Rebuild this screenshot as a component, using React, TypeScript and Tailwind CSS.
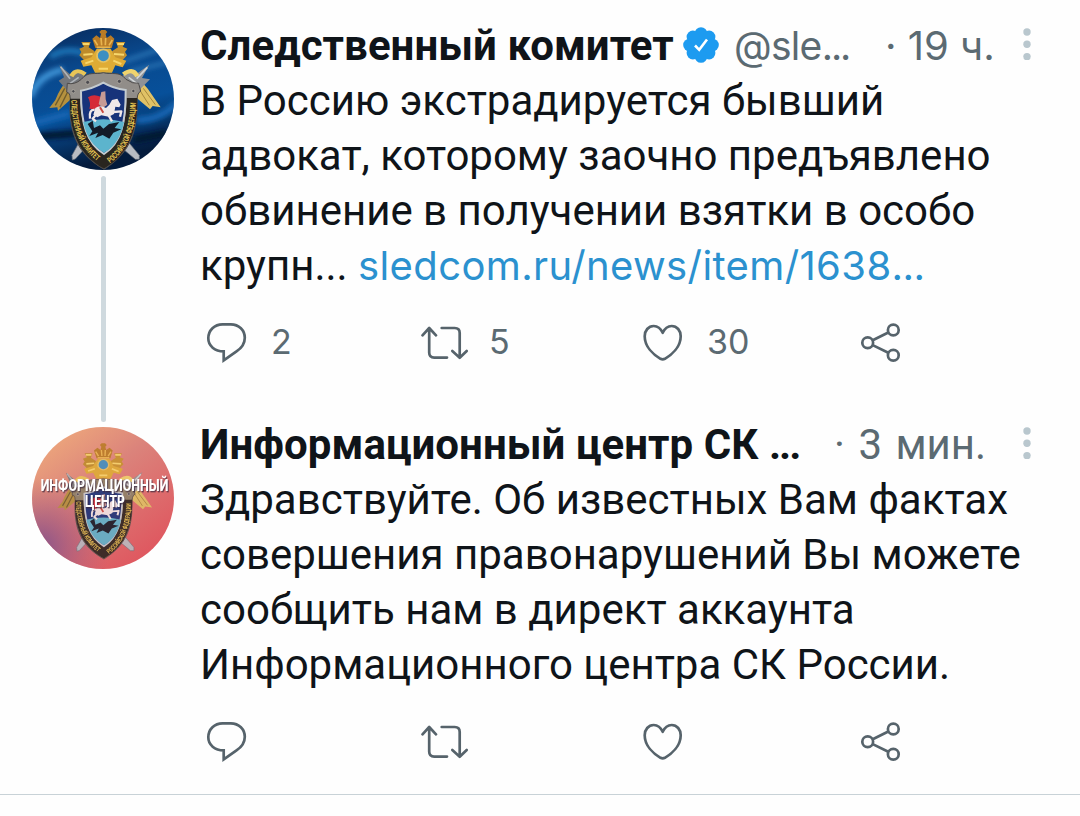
import type { ReactNode } from 'react';

// ─────────────────────────────────────────────
// Thread — two connected tweets with action rows
// ─────────────────────────────────────────────

interface TweetProps {
  avatar: ReactNode;
  header: ReactNode;
  children: ReactNode;
  counts?: { replies?: number; retweets?: number; likes?: number };
  hasNext?: boolean;
}

/* ── Emblem: crowned double eagle behind a shield ── */
const Emblem = ({ id, plate = '#918d89' }: { id: string; plate?: string }) => (
  <g>
    {/* swords */}
    <path d="M180 362 L196 384 L166 417 L157 420 L156 406 Z" fill="#b9bcc2" stroke="#666b76" strokeWidth="2" />
    <path d="M322 362 L308 386 L346 418 L358 418 L358 406 Z" fill="#b9bcc2" stroke="#666b76" strokeWidth="2" />
    {/* wings */}
    <path d="M142 180 Q120 204 106 240 L88 264 L112 262 L114 272 L150 240 L160 205 Z" fill="#b5913e" />
    <path d="M360 180 Q384 204 404 236 L422 262 L398 258 L390 268 L350 234 L342 205 Z" fill="#e0c266" />
    <path d="M134 205 L106 256 M146 210 L120 262" stroke="#6f5c2c" strokeWidth="4" />
    <path d="M370 205 L406 254 M360 212 L388 256" stroke="#a5873c" strokeWidth="3" />
    {/* metal hilts over the wings */}
    <path d="M118 136 L152 164 L182 158 L198 172 L170 192 L142 212 L116 182 L132 172 Z" fill="#74777c" />
    <path d="M122 140 L150 176 M142 196 L176 172" stroke="#aeb3b8" strokeWidth="5" />
    <path d="M388 134 L352 160 L318 158 L304 172 L332 190 L356 212 L390 178 L366 174 Z" fill="#8f9296" />
    <path d="M382 142 L350 176 M358 196 L326 172" stroke="#d2d5d6" strokeWidth="5" />
    <path d="M148 166 Q164 134 200 158 L192 168 Q172 150 160 172 Z" fill="#e9c557" />
    <path d="M306 158 Q342 132 358 166 L346 172 Q334 150 314 168 Z" fill="#f0d36d" />
    {/* large crown */}
    <path d="M226 84 L217 56 L229 46 L240 54 L243 42 L238 36 L244 30 L256 30 L262 36 L257 42 L260 54 L272 46 L283 56 L275 84 Z" fill="#b97b25" />
    <path d="M223 60 L233 76 M243 54 L245 76 M257 54 L256 76 M277 60 L267 76 M230 82 H271" stroke="#e9b54f" strokeWidth="5" />
    {/* side crowns and eagle heads */}
    <path d="M184 66 H212 L206 82 L224 94 L220 114 L194 122 L178 106 L184 96 L178 86 L192 80 Z" fill="#bd8b2b" />
    <path d="M288 66 H316 L308 80 L322 86 L315 96 L321 106 L306 122 L280 114 L276 94 L294 82 Z" fill="#c7932e" />
    <path d="M182 122 L214 112 L230 86 L272 86 L286 112 L319 122 L308 142 L286 136 L276 158 L225 158 L214 136 L190 140 Z" fill="#dfac35" />
    <path d="M188 72 H208 M292 72 H312 M190 104 L218 102 M282 102 L312 104 M196 130 L220 122 M280 122 L304 132 M236 146 L264 146" stroke="#f7d76c" strokeWidth="6" />
    <circle cx="250" cy="107" r="19" fill="#3d8fc2" stroke="#e3c165" strokeWidth="5" />
    {/* shield plate */}
    <path d="M250 158 C225 165 205 152 184 178 Q164 195 142 190 L140 216 Q154 218 150 250 C148 340 172 402 252 448 C328 400 352 340 351 250 Q350 218 362 214 L356 190 Q338 192 318 178 C298 152 275 165 250 158 Z" fill={plate} stroke="#4d4a49" strokeWidth="3" />
    <path d="M150 236 C147 330 172 402 252 446 C329 402 353 330 352 234 L320 234 C318 320 300 372 252 402 C204 374 184 320 180 236 Z" fill="#29251f" />
    {/* inner field */}
    <path d="M250 188 Q218 206 183 212 C182 310 200 370 252 402 C302 370 318 312 317 210 Q280 206 250 188 Z" fill="#17337a" stroke="#c4cbd0" strokeWidth="6" />
    <path d="M190 306 Q250 290 312 306 C304 350 284 380 252 398 C218 378 199 350 190 306 Z" fill="#5cb4cd" />
    {/* rider */}
    <path d="M204 232 Q220 220 242 230 L244 250 L232 268 L208 266 Q214 250 204 232 Z" fill="#d52b38" />
    <path d="M244 216 L256 214 L257 238 L262 254 L248 264 L236 252 Z" fill="#c79a94" />
    <path d="M226 264 Q240 254 258 264 L268 254 L276 240 L292 236 L302 254 L298 262 L286 260 L282 282 L266 290 L244 286 L232 292 L220 284 Z" fill="#f0e8e8" />
    <path d="M224 270 Q206 268 210 296 M280 276 L304 274 L300 290 M266 286 L276 304 M228 284 L218 296 L228 304" stroke="#f0e8e8" strokeWidth="7" fill="none" strokeLinejoin="round" />
    <path d="M240 262 L250 278" stroke="#c9483e" strokeWidth="6" />
    {/* dragon */}
    <path d="M203 312 L218 302 L222 324 L240 316 L250 326 L267 312 L298 306 L284 324 L304 328 L280 338 L268 356 L248 345 L226 354 L234 338 L208 348 L217 334 Z" fill="#131c28" />
    {/* rivets */}
    <g fill="#4c4b50" stroke="#bbb5ac" strokeWidth="2">
      <circle cx="203" cy="187" r="6" />
      <circle cx="298" cy="184" r="6" />
      <circle cx="160" cy="214" r="5" />
      <circle cx="340" cy="213" r="5" />
    </g>
    <path id={`${id}-left`} d="M154 240 C155 320 174 382 240 430" fill="none" />
    <path id={`${id}-right`} d="M270 430 C330 384 347 320 348 236" fill="none" />
    <g fill="#e5c452" fontFamily="Roboto, sans-serif" fontWeight="700" fontSize="24">
      <text><textPath href={`#${id}-left`} textLength="206" lengthAdjust="spacingAndGlyphs">СЛЕДСТВЕННЫЙ КОМИТЕТ</textPath></text>
      <text><textPath href={`#${id}-right`} textLength="206" lengthAdjust="spacingAndGlyphs">РОССИЙСКОЙ ФЕДЕРАЦИИ</textPath></text>
    </g>
  </g>
);

const CommitteeAvatar = () => (
  <svg viewBox="36 24 426 426" className="size-[142px] shrink-0 rounded-full">
    <defs>
      <linearGradient id="night" x1="0" y1="0" x2="0.25" y2="1">
        <stop offset="0" stopColor="#082858" />
        <stop offset="0.35" stopColor="#09498e" />
        <stop offset="0.65" stopColor="#07509a" />
        <stop offset="1" stopColor="#041b3c" />
      </linearGradient>
      <filter id="haze"><feGaussianBlur stdDeviation="8" /></filter>
    </defs>
    <rect x="36" y="24" width="426" height="426" fill="url(#night)" />
    <g filter="url(#haze)" fill="none">
      <path d="M90 110 Q140 80 190 100" stroke="#1d74b8" strokeWidth="18" />
      <path d="M310 125 L470 70 M330 155 L470 120" stroke="#2d78b8" strokeWidth="10" />
      <path d="M30 230 Q60 160 130 150" stroke="#3e93d6" strokeWidth="20" />
      <path d="M40 310 L150 280 M350 300 Q420 300 470 250" stroke="#1265b2" strokeWidth="22" />
      <path d="M50 350 L170 340 M340 360 L440 340" stroke="#03172f" strokeWidth="22" />
    </g>
    <Emblem id="committee" />
  </svg>
);

const InfoCenterAvatar = () => (
  <svg viewBox="36 36 426 426" className="size-[142px] shrink-0 rounded-full">
    <defs>
      <linearGradient id="sunset" x1="0" y1="0" x2="0.75" y2="1">
        <stop offset="0" stopColor="#f3b27c" />
        <stop offset="0.45" stopColor="#db837b" />
        <stop offset="1" stopColor="#df555e" />
      </linearGradient>
      <radialGradient id="plum" cx="0.05" cy="0.85" r="0.5">
        <stop offset="0" stopColor="#85538c" />
        <stop offset="1" stopColor="#b35c79" stopOpacity="0" />
      </radialGradient>
    </defs>
    <rect x="36" y="36" width="426" height="426" fill="url(#sunset)" />
    <rect x="36" y="36" width="426" height="426" fill="url(#plum)" />
    <g transform="translate(37.5 60.1) scale(0.85 0.83)" opacity="0.88">
      <Emblem id="center" plate="#8d8268" />
    </g>
    <g
      fill="#fff"
      fontFamily="Roboto, sans-serif"
      fontWeight="800"
      fontSize="51"
      className="drop-shadow-[3px_4px_2px_rgba(60,40,60,0.7)]"
    >
      <text x="62" y="227" textLength="383" lengthAdjust="spacingAndGlyphs">ИНФОРМАЦИОННЫЙ</text>
      <text x="195" y="276" textLength="120" lengthAdjust="spacingAndGlyphs">ЦЕНТР</text>
    </g>
  </svg>
);

/* ── Icons ── */
const iconClass = 'size-12 shrink-0 fill-none stroke-[#56636b] stroke-[2.7]';

const ReplyIcon = () => (
  <svg viewBox="0 0 48 48" className={iconClass}>
    <path d="M20.7 42.3V33.4C11.8 33.2 5.3 28 5.3 20.3C5.3 12 11.6 6.3 19.5 6.3H27.8C36 6.3 41.8 12.3 41.8 19.8C41.8 25.6 38.8 30 33.5 33.4Z" />
  </svg>
);

const RetweetIcon = () => (
  <svg viewBox="0 0 48 48" className={iconClass} strokeLinecap="round" strokeLinejoin="round">
    <path d="M1.5 17.3L8.2 10L15 17.3M8.2 10V34.5Q8.2 39.6 13.2 39.6H26" />
    <path d="M20.7 10H33.7Q38.7 10 38.7 15V39.6M31.3 33L38.7 39.8L45.7 33" />
  </svg>
);

const LikeIcon = () => (
  <svg viewBox="0 0 48 48" className={iconClass} strokeLinejoin="round">
    <path d="M23.7 14.8C21.7 10.4 18.4 8 14.7 8C9.4 8 5.7 12.6 5.7 18.2C5.7 28.5 14.2 36.5 21.5 40.8Q23.7 42 25.9 40.8C33.2 36.5 41.7 28.5 41.7 18.2C41.7 12.6 38 8 32.7 8C29 8 25.7 10.4 23.7 14.8Z" />
  </svg>
);

const ShareIcon = () => (
  <svg viewBox="0 0 48 48" className={iconClass}>
    <circle cx="10.7" cy="24.7" r="5.4" />
    <circle cx="36.3" cy="12" r="5.4" />
    <circle cx="36.3" cy="37.3" r="5.4" />
    <path d="M15.7 22.3L31.3 14.5M15.7 27.1L31.3 34.8" />
  </svg>
);

const VerifiedBadge = () => (
  <svg viewBox="0 0 36 36" className="mb-0.5 size-9 shrink-0">
    <g fill="#1d9bf0">
      <circle cx="18" cy="18" r="14" />
      <circle cx="18" cy="6.5" r="6.3" />
      <circle cx="26.1" cy="9.9" r="6.3" />
      <circle cx="29.5" cy="18" r="6.3" />
      <circle cx="26.1" cy="26.1" r="6.3" />
      <circle cx="18" cy="29.5" r="6.3" />
      <circle cx="9.9" cy="26.1" r="6.3" />
      <circle cx="6.5" cy="18" r="6.3" />
      <circle cx="9.9" cy="9.9" r="6.3" />
    </g>
    <path d="M12 18.5L16.2 22.8L24 12.5" fill="none" stroke="#fff" strokeWidth="2.6" />
  </svg>
);

const MoreIcon = () => (
  <svg viewBox="0 0 8 32" className="mr-[49px] mb-1 h-8 w-2 shrink-0 fill-[#b9c7ce]">
    <circle cx="4" cy="4" r="3.7" />
    <circle cx="4" cy="16.3" r="3.7" />
    <circle cx="4" cy="28.6" r="3.7" />
  </svg>
);

const Action = ({ icon, count }: { icon: ReactNode; count?: number }) => (
  <div className="flex w-[218px] items-center gap-5 font-[Inter,sans-serif] text-[34px] leading-12 text-[#5b6a72]">
    {icon}
    {count !== undefined && <span>{count}</span>}
  </div>
);

const Tweet = ({ avatar, header, children, counts = {}, hasNext }: TweetProps) => (
  <article className="flex h-[399px] gap-[26px] pl-8">
    <div className="flex w-[142px] shrink-0 flex-col items-center">
      {avatar}
      {hasNext && <div className="mt-1.5 mb-[5px] w-[5px] flex-1 rounded-sm bg-[#cfd9de]" />}
    </div>
    <div className="-mt-2.5 min-w-0 flex-1 whitespace-nowrap">
      <div className="flex h-[55px] items-center">{header}</div>
      <div className="h-[220px] text-[42px] leading-[55px]">{children}</div>
      <div className="mt-[25px] ml-[3px] flex">
        <Action icon={<ReplyIcon />} count={counts.replies} />
        <Action icon={<RetweetIcon />} count={counts.retweets} />
        <Action icon={<LikeIcon />} count={counts.likes} />
        <Action icon={<ShareIcon />} />
      </div>
    </div>
  </article>
);

export default function App() {
  return (
    <main className="h-[816px] w-[1080px] overflow-hidden bg-[#fefefe] pt-7 font-[Roboto,sans-serif] text-[#0f1419]">
      <Tweet
        hasNext
        avatar={<CommitteeAvatar />}
        counts={{ replies: 2, retweets: 5, likes: 30 }}
        header={
          <>
            <span className="w-[483px] text-[42px] leading-[55px] font-bold tracking-[0.05px]">Следственный комитет</span>
            <VerifiedBadge />
            <span className="ml-[15px] w-[151px] font-[Inter,sans-serif] text-[39px] leading-[55px] tracking-[-0.7px] text-[#5b6a72]">
              @sle<span className="tracking-[-2px]">...</span>
            </span>
            <span className="flex-1 font-[Inter,Roboto,sans-serif] text-[40px] leading-[55px] text-[#5b6a72]">· 19 ч.</span>
            <MoreIcon />
          </>
        }
      >
        <div>В Россию экстрадируется бывший</div>
        <div>адвокат, которому заочно предъявлено</div>
        <div>обвинение в получении взятки в особо</div>
        <div>
          крупн...{' '}
          <a className="font-[Inter,sans-serif] text-[40px] tracking-[0.38px] text-[#2b91cf]">
            sledcom.ru/news/item/1638<span className="tracking-[-0.5px]">...</span>
          </a>
        </div>
      </Tweet>

      <Tweet
        avatar={<InfoCenterAvatar />}
        header={
          <>
            <span className="w-[634px] text-[42px] leading-[55px] font-bold tracking-[0.05px]">
              Информационный центр СК <span className="tracking-[-2px]">...</span>
            </span>
            <span className="flex-1 text-[42px] leading-[55px] [word-spacing:3px] text-[#5b6a72]">· 3 мин.</span>
            <MoreIcon />
          </>
        }
      >
        <div>Здравствуйте. Об известных Вам фактах</div>
        <div>совершения правонарушений Вы можете</div>
        <div>сообщить нам в директ аккаунта</div>
        <div>Информационного центра СК России.</div>
      </Tweet>
      <hr className="-mt-8 border-t border-[#c8d2d7]" />
    </main>
  );
}
